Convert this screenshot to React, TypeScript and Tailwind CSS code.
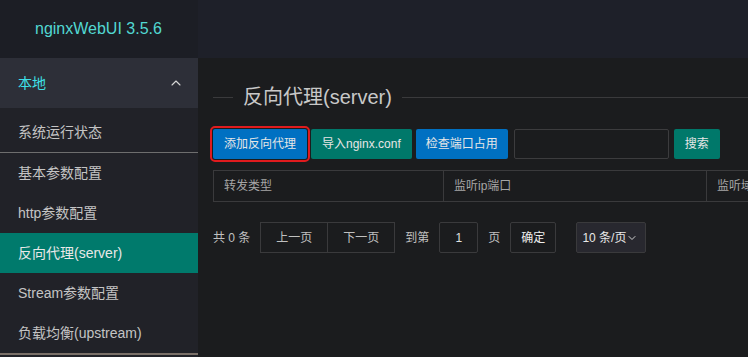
import React from 'react';
import { ChevronUp, ChevronDown } from 'lucide-react';

const menu = [
  { title: '基本参数配置' },
  { title: 'http参数配置' },
  { title: '反向代理(server)', active: true },
  { title: 'Stream参数配置' },
  { title: '负载均衡(upstream)' },
];

const font = { fontFamily: '"Liberation Sans", "Noto Sans CJK SC", sans-serif' };

const App = () => {
  return (
    <div className="flex h-[357px] w-[748px] overflow-hidden bg-[#1b1c1e] text-[12px] text-[#c4c4c4]" style={font}>
      {/* Sidebar */}
      <aside className="flex w-[198px] shrink-0 flex-col bg-[#212228]">
        <div className="flex h-[58px] items-center bg-[#1c1e25] pl-[35px] text-[16px] text-[#52d8d2]">
          nginxWebUI 3.5.6
        </div>
        <div className="flex h-[50px] items-center justify-between bg-[#2d2f38] pl-[18px] pr-[14px] text-[14px] text-[#3ee0e8]">
          <span>本地</span>
          <ChevronUp className="h-[16px] w-[16px] text-[#d8d8d8]" strokeWidth={1.6} />
        </div>
        <div className="pt-[4px]">
          <div className="flex h-[41px] items-center border-b border-[#6e6e6e] pl-[18px] text-[14px]">
            系统运行状态
          </div>
          {menu.map((item, i) => (
            <div
              key={i}
              className={
                item.active
                  ? 'flex h-[40px] items-center bg-[#007a6c] pl-[18px] text-[14px] text-[#e8e8e8]'
                  : 'flex h-[40px] items-center pl-[18px] text-[14px]'
              }
            >
              {item.title}
            </div>
          ))}
          <div className="h-[2px] bg-[#7a7068]" />
        </div>
      </aside>

      {/* Main */}
      <main className="flex min-w-0 flex-1 flex-col">
        <div className="h-[58px] shrink-0 bg-[#1e2029]" />
        <div className="pl-[15px] pt-[26px]">
          {/* legend */}
          <div className="flex items-center">
            <div className="h-px w-[20px] bg-[#3a3a3c]" />
            <span className="px-[10px] text-[20px] leading-[26px] text-[#c8c8c8]">反向代理(server)</span>
            <div className="h-px flex-1 bg-[#3a3a3c]" />
          </div>

          {/* toolbar */}
          <div className="mt-[19px] flex items-center gap-[4px]">
            <button className="h-[30px] rounded-[2px] bg-[#0070c2] px-[11px] text-[12px] text-[#e6e6e6] outline-2 outline-offset-[1px] outline-[#e01b1e]">
              添加反向代理
            </button>
            <button className="h-[30px] rounded-[2px] bg-[#00786a] px-[11px] text-[12px] text-[#e6e6e6]">
              导入nginx.conf
            </button>
            <button className="h-[30px] rounded-[2px] bg-[#0070c2] px-[10px] text-[12px] text-[#e6e6e6]">
              检查端口占用
            </button>
            <div className="ml-[2px] h-[30px] w-[155px] rounded-[2px] border border-[#3c3c3e] bg-[#1b1c1e]" />
            <button className="ml-[1px] h-[30px] rounded-[2px] bg-[#00786a] px-[11px] text-[12px] text-[#e6e6e6]">
              搜索
            </button>
          </div>

          {/* table header */}
          <div className="mt-[11px] flex h-[32px] border border-r-0 border-[#3a3a3c] text-[#a6a6a6]">
            <div className="flex w-[230px] shrink-0 items-center border-r border-[#3a3a3c] pl-[10px]">转发类型</div>
            <div className="flex w-[263px] shrink-0 items-center border-r border-[#3a3a3c] pl-[10px]">监听ip端口</div>
            <div className="flex w-[200px] shrink-0 items-center pl-[10px] whitespace-nowrap">监听域名</div>
          </div>

          {/* pagination */}
          <div className="mt-[20px] flex h-[31px] items-center text-[12px] text-[#c0c0c0]">
            <span className="mr-[10px]">共 0 条</span>
            <div className="flex h-full border border-[#3a3a3c]">
              <div className="flex w-[67px] items-center justify-center border-r border-[#3a3a3c]">上一页</div>
              <div className="flex w-[66px] items-center justify-center">下一页</div>
            </div>
            <span className="ml-[10px]">到第</span>
            <div className="ml-[10px] flex h-full w-[39px] items-center justify-center rounded-[2px] border border-[#3a3a3c] text-[#e0e0e0]">
              1
            </div>
            <span className="ml-[10px]">页</span>
            <div className="ml-[10px] flex h-full w-[46px] items-center justify-center rounded-[2px] border border-[#3a3a3c] text-[#eeeeee]">
              确定
            </div>
            <div className="ml-[20px] flex h-full w-[70px] items-center justify-between whitespace-nowrap rounded-[2px] border border-[#3a3a3c] bg-[#28282f] pl-[5px] pr-[7px] text-[12px] text-[#e8e8e8]">
              <span>10 条/页</span>
              <ChevronDown className="h-[12px] w-[12px] shrink-0 text-[#d0d0d0]" strokeWidth={2} />
            </div>
          </div>
        </div>
      </main>
    </div>
  );
};

export default App;
